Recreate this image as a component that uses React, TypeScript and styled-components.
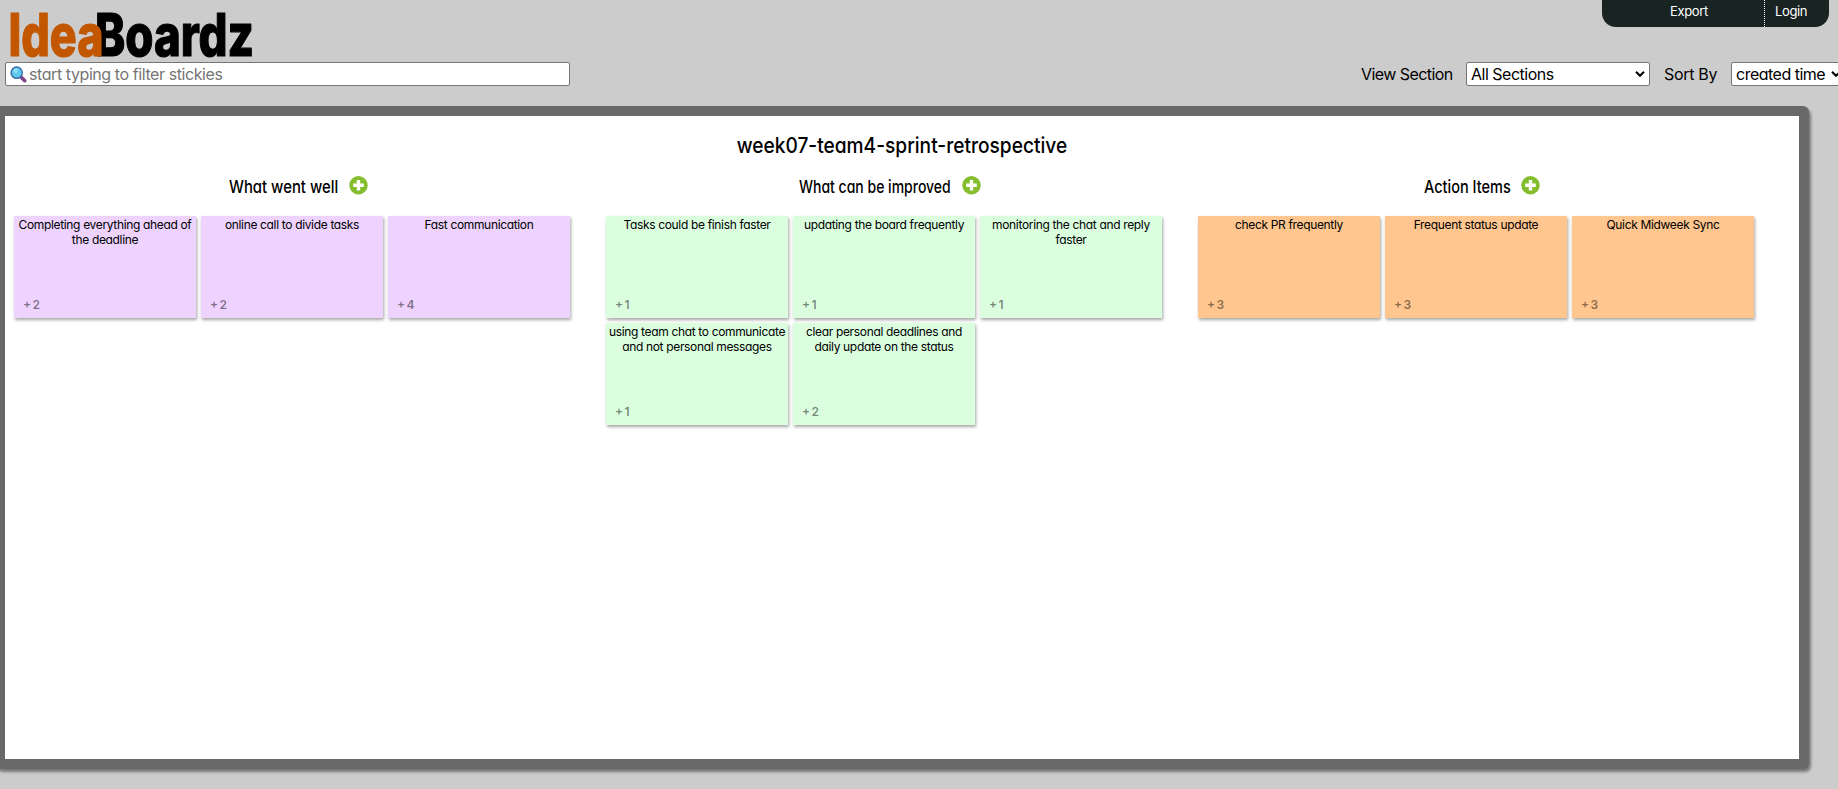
import React from 'react';
import styled, { createGlobalStyle } from 'styled-components';

const GlobalStyle = createGlobalStyle`
  * { box-sizing: border-box; }
  html, body { margin: 0; background: #ccc; }
  body {
    height: 789px;
    overflow: hidden;
    font-family: Inter, Lato, "Liberation Sans", sans-serif;
    font-feature-settings: "cv11" 1;
    color: #000;
  }
`;

const Page = styled.div`
  width: 1838px;
  height: 789px;
  overflow: hidden;
`;

const TopBar = styled.header`
  display: flex;
  justify-content: space-between;
  align-items: flex-start;
  height: 62px;
  padding-right: 9px;
`;

const Logo = styled.svg`
  display: block;
  width: 270px;
  height: 62px;
  overflow: visible;
  font-family: Inter, "DejaVu Sans", sans-serif;
  font-weight: 800;
  font-size: 58.5px;
  font-feature-settings: normal;
`;

const Menu = styled.nav`
  display: flex;
  width: 227px;
  height: 27px;
  overflow: hidden;
  background: #182322;
  border-radius: 0 0 14px 14px;
`;

const MenuLink = styled.a<{ $width: number; $pad: number; $divider?: boolean }>`
  width: ${p => p.$width}px;
  height: 27px;
  padding-left: ${p => p.$pad}px;
  border-right: ${p => (p.$divider ? '1px dotted #fff' : '0')};
  color: #fff;
  font-size: 13px;
  line-height: 23px;
  letter-spacing: -0.35px;
`;

const FilterBar = styled.div`
  display: flex;
  align-items: center;
  height: 24px;
  padding-left: 5px;
  font-size: 16px;
`;

const SearchBox = styled.label`
  display: flex;
  align-items: center;
  width: 565px;
  height: 24px;
  padding-left: 4px;
  margin-right: 791px;
  background: #fff;
  border: 1px solid #767676;
  border-radius: 2px;
  flex: none;
`;

const SearchInput = styled.input`
  flex: 1;
  height: 20px;
  padding: 0;
  margin-left: 2px;
  border: 0;
  outline: 0;
  background: transparent;
  font: inherit;
  font-feature-settings: inherit;
  letter-spacing: -0.42px;
  &::placeholder { color: #757575; opacity: 1; }
`;

const FilterLabel = styled.span<{ $width: number; $spacing: number }>`
  flex: none;
  width: ${p => p.$width}px;
  white-space: nowrap;
  letter-spacing: ${p => p.$spacing}px;
`;

const SelectBox = styled.div<{ $width: number; $gap: number }>`
  display: flex;
  flex: none;
  align-items: center;
  justify-content: space-between;
  width: ${p => p.$width}px;
  height: 24px;
  margin-right: ${p => p.$gap}px;
  padding: 0 3px 0 4px;
  background: #fff;
  border: 1px solid #767676;
  border-radius: 2px;
  white-space: nowrap;
  letter-spacing: -0.5px;
`;

const Board = styled.main`
  width: 1814px;
  height: 663px;
  margin: 20px 0 0 -5px;
  border: 10px solid #696969;
  border-radius: 6px;
  background: #fff;
  box-shadow: 2px 3px 3px #777;
`;

const BoardTitle = styled.h1`
  height: 58px;
  margin: 0;
  padding-top: 16px;
  text-align: center;
  font-size: 22px;
  line-height: 26px;
  font-weight: 550;
`;

const Squeeze = styled.span<{ $x: number }>`
  display: inline-block;
  white-space: nowrap;
  transform: scaleX(${p => p.$x});
`;

const Columns = styled.div`
  display: flex;
`;

const Column = styled.section`
  width: 592px;
  flex: none;
`;

const ColumnHead = styled.div<{ $left: number }>`
  display: flex;
  align-items: center;
  height: 42px;
  padding: 0 0 20px ${p => p.$left}px;
`;

const ColumnTitle = styled.h2<{ $width: number; $x: number }>`
  width: ${p => p.$width}px;
  margin: 3px 0 0;
  font-size: 17.5px;
  line-height: 22px;
  font-weight: 550;
  white-space: nowrap;
  transform: scaleX(${p => p.$x});
  transform-origin: left;
`;

const Notes = styled.div`
  display: flex;
  flex-wrap: wrap;
  gap: 5px;
  padding-left: 9px;
`;

const Note = styled.article<{ $color: string }>`
  display: flex;
  flex-direction: column;
  justify-content: space-between;
  width: 182px;
  height: 102px;
  padding: 1px 0 3px;
  background: ${p => p.$color};
  box-shadow: 1px 2px 3px rgba(0, 0, 0, 0.35);
`;

const NoteText = styled.p`
  margin: 0;
  text-align: center;
  font-size: 12px;
  line-height: 15px;
  letter-spacing: -0.34px;
  white-space: pre-line;
`;

const Votes = styled.span`
  padding-left: 9px;
  color: rgba(0, 0, 0, 0.48);
  font-size: 12px;
  line-height: 20px;
  font-weight: 600;
  word-spacing: -1.5px;
`;

const Wordmark = () => (
  <Logo viewBox="0 0 270 62" role="img" aria-label="IdeaBoardz">
    <g transform="translate(0 56)" strokeWidth="1.2" strokeLinejoin="round">
      <text x="95" textLength="159" lengthAdjust="spacingAndGlyphs" fill="#000" stroke="#000">Boardz</text>
      <text x="8.5" textLength="95" lengthAdjust="spacingAndGlyphs" fill="#c25700" stroke="#c25700">Idea</text>
    </g>
  </Logo>
);

const Magnifier = () => (
  <svg width="17" height="17" viewBox="0 0 17 17">
    <path d="M10.5 10.5l4.2 4.2" stroke="#7d4488" strokeWidth="3.6" strokeLinecap="round" />
    <circle cx="6.7" cy="6.7" r="5.6" fill="#5fc8ee" stroke="#3b6ea8" strokeWidth="1.5" />
    <circle cx="5.6" cy="4.8" r="2.2" fill="#8be0f8" />
  </svg>
);

const Chevron = () => (
  <svg width="12" height="8" viewBox="0 0 12 8">
    <path d="M2 1.8l4 4 4-4" fill="none" stroke="#000" strokeWidth="2" />
  </svg>
);

const AddIcon = () => (
  <svg width="19" height="19" viewBox="0 0 19 19">
    <circle cx="9.5" cy="9.2" r="9.2" fill="#84bd2e" />
    <path d="M9.5 3.9v10.6M4.2 9.2h10.6" stroke="#fff" strokeWidth="3.4" />
  </svg>
);

type Item = { text: string; votes: number };
type Section = { title: string; left: number; width: number; x: number; color: string; items: Item[] };

const SECTIONS: Section[] = [
  {
    title: 'What went well', left: 224, width: 120, x: 0.85, color: '#edd3fd',
    items: [
      { text: 'Completing everything ahead of\nthe deadline', votes: 2 },
      { text: 'online call to divide tasks', votes: 2 },
      { text: 'Fast communication', votes: 4 },
    ],
  },
  {
    title: 'What can be improved', left: 202, width: 163, x: 0.8, color: '#dbfedf',
    items: [
      { text: 'Tasks could be finish faster', votes: 1 },
      { text: 'updating the board frequently', votes: 1 },
      { text: 'monitoring the chat and reply\nfaster', votes: 1 },
      { text: 'using team chat to communicate\nand not personal messages', votes: 1 },
      { text: 'clear personal deadlines and\ndaily update on the status', votes: 2 },
    ],
  },
  {
    title: 'Action Items', left: 235, width: 97, x: 0.83, color: '#ffc68f',
    items: [
      { text: 'check PR frequently', votes: 3 },
      { text: 'Frequent status update', votes: 3 },
      { text: 'Quick Midweek Sync', votes: 3 },
    ],
  },
];

export default function App() {
  return (
    <Page>
      <GlobalStyle />
      <TopBar>
        <Wordmark />
        <Menu>
          <MenuLink $width={163} $pad={68} $divider>Export</MenuLink>
          <MenuLink $width={64} $pad={10}>Login</MenuLink>
        </Menu>
      </TopBar>
      <FilterBar>
        <SearchBox>
          <Magnifier />
          <SearchInput placeholder="start typing to filter stickies" />
        </SearchBox>
        <FilterLabel $width={105} $spacing={-0.57}>View Section</FilterLabel>
        <SelectBox $width={184} $gap={14}>All Sections<Chevron /></SelectBox>
        <FilterLabel $width={67} $spacing={-0.3}>Sort By</FilterLabel>
        <SelectBox $width={115} $gap={0}>created time<Chevron /></SelectBox>
      </FilterBar>
      <Board>
        <BoardTitle><Squeeze $x={0.87}>week07-team4-sprint-retrospective</Squeeze></BoardTitle>
        <Columns>
          {SECTIONS.map(s => (
            <Column key={s.title}>
              <ColumnHead $left={s.left}>
                <ColumnTitle $width={s.width} $x={s.x}>{s.title}</ColumnTitle>
                <AddIcon />
              </ColumnHead>
              <Notes>
                {s.items.map(n => (
                  <Note key={n.text} $color={s.color}>
                    <NoteText>{n.text}</NoteText>
                    <Votes>+ {n.votes}</Votes>
                  </Note>
                ))}
              </Notes>
            </Column>
          ))}
        </Columns>
      </Board>
    </Page>
  );
}
